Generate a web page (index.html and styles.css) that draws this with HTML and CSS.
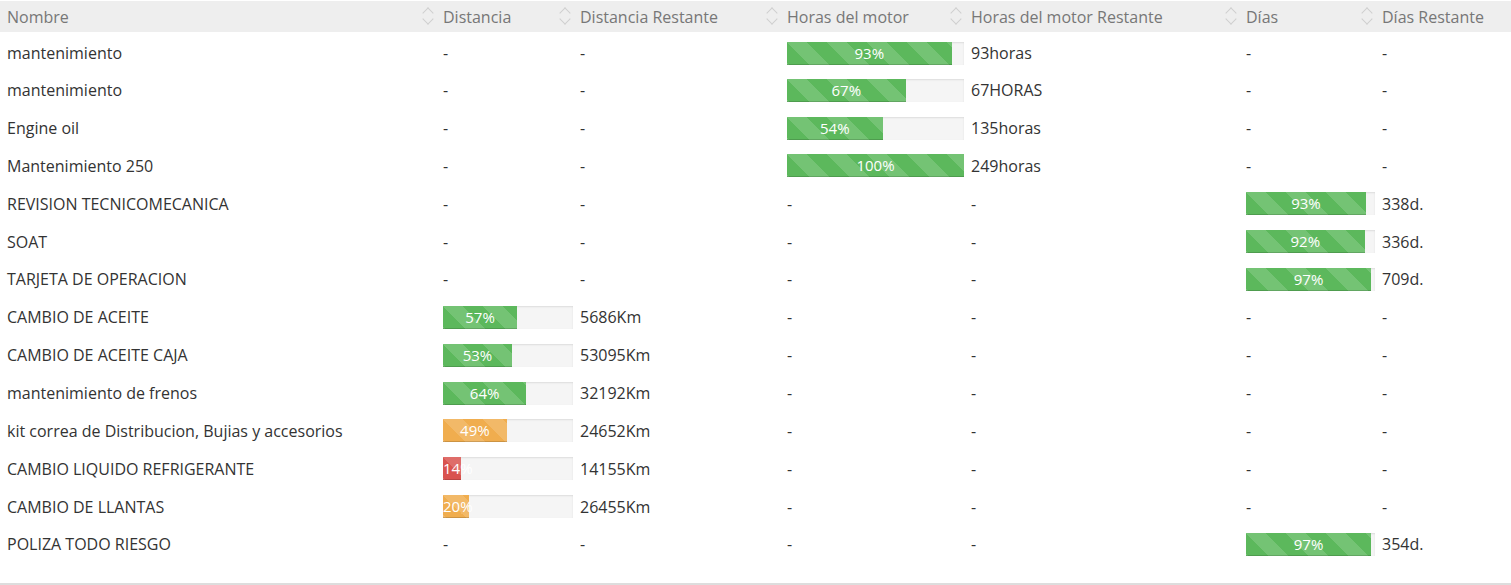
FILE: index.html
```html
<!DOCTYPE html>
<html lang="es">
<head>
<meta charset="utf-8">
<title>Mantenimientos</title>
<link rel="stylesheet" href="styles.css">
</head>
<body>
<div class="wrap">
<table class="grid">
  <colgroup>
    <col class="c1"><col class="c2"><col class="c3"><col class="c4"><col class="c5"><col class="c6"><col class="c7">
  </colgroup>
  <thead>
    <tr>
      <th><div class="hd"><span>Nombre</span><span class="sort"></span></div></th>
      <th><div class="hd"><span>Distancia</span><span class="sort"></span></div></th>
      <th><div class="hd"><span>Distancia Restante</span><span class="sort"></span></div></th>
      <th><div class="hd"><span>Horas del motor</span><span class="sort"></span></div></th>
      <th><div class="hd"><span>Horas del motor Restante</span><span class="sort"></span></div></th>
      <th><div class="hd"><span>Días</span><span class="sort"></span></div></th>
      <th><div class="hd"><span>Días Restante</span></div></th>
    </tr>
  </thead>
  <tbody>
    <tr><td>mantenimiento</td><td>-</td><td>-</td><td><div class="bar"><div class="fill ok" style="width:93%">93%</div></div></td><td>93horas</td><td>-</td><td>-</td></tr>
    <tr><td>mantenimiento</td><td>-</td><td>-</td><td><div class="bar"><div class="fill ok" style="width:67%">67%</div></div></td><td>67HORAS</td><td>-</td><td>-</td></tr>
    <tr><td>Engine oil</td><td>-</td><td>-</td><td><div class="bar"><div class="fill ok" style="width:54%">54%</div></div></td><td>135horas</td><td>-</td><td>-</td></tr>
    <tr><td>Mantenimiento 250</td><td>-</td><td>-</td><td><div class="bar"><div class="fill ok" style="width:100%">100%</div></div></td><td>249horas</td><td>-</td><td>-</td></tr>
    <tr><td>REVISION TECNICOMECANICA</td><td>-</td><td>-</td><td>-</td><td>-</td><td><div class="bar"><div class="fill ok" style="width:93%">93%</div></div></td><td>338d.</td></tr>
    <tr><td>SOAT</td><td>-</td><td>-</td><td>-</td><td>-</td><td><div class="bar"><div class="fill ok" style="width:92%">92%</div></div></td><td>336d.</td></tr>
    <tr><td>TARJETA DE OPERACION</td><td>-</td><td>-</td><td>-</td><td>-</td><td><div class="bar"><div class="fill ok" style="width:97%">97%</div></div></td><td>709d.</td></tr>
    <tr><td>CAMBIO DE ACEITE</td><td><div class="bar"><div class="fill ok" style="width:57%">57%</div></div></td><td>5686Km</td><td>-</td><td>-</td><td>-</td><td>-</td></tr>
    <tr><td>CAMBIO DE ACEITE CAJA</td><td><div class="bar"><div class="fill ok" style="width:53%">53%</div></div></td><td>53095Km</td><td>-</td><td>-</td><td>-</td><td>-</td></tr>
    <tr><td>mantenimiento de frenos</td><td><div class="bar"><div class="fill ok" style="width:64%">64%</div></div></td><td>32192Km</td><td>-</td><td>-</td><td>-</td><td>-</td></tr>
    <tr><td>kit correa de Distribucion, Bujias y accesorios</td><td><div class="bar"><div class="fill warn" style="width:49%">49%</div></div></td><td>24652Km</td><td>-</td><td>-</td><td>-</td><td>-</td></tr>
    <tr><td>CAMBIO LIQUIDO REFRIGERANTE</td><td><div class="bar"><div class="fill bad" style="width:14%">14%</div></div></td><td>14155Km</td><td>-</td><td>-</td><td>-</td><td>-</td></tr>
    <tr><td>CAMBIO DE LLANTAS</td><td><div class="bar"><div class="fill warn" style="width:20%">20%</div></div></td><td>26455Km</td><td>-</td><td>-</td><td>-</td><td>-</td></tr>
    <tr><td>POLIZA TODO RIESGO</td><td>-</td><td>-</td><td>-</td><td>-</td><td><div class="bar"><div class="fill ok" style="width:97%">97%</div></div></td><td>354d.</td></tr>
  </tbody>
</table>
</div>
</body>
</html>
```
FILE: styles.css
```css
html, body {
  margin: 0;
  padding: 0;
  background: #fff;
}
body {
  font-family: "Open Sans", "Liberation Sans", sans-serif;
  font-size: 16px;
  color: #333;
}
.wrap {
  padding-top: 1px;
  height: 582px;
  border-bottom: 2px solid #dddddd;
}
.grid {
  border-collapse: collapse;
  table-layout: fixed;
  width: 1511px;
}
.c1 { width: 436px; }
.c2 { width: 137px; }
.c3 { width: 207px; }
.c4 { width: 184px; }
.c5 { width: 275px; }
.c6 { width: 136px; }
.c7 { width: 136px; }
.grid th {
  background: #eeeeee;
  color: #777;
  font-weight: normal;
  text-align: left;
  height: 31px;
  padding: 0 0 0 7px;
  border-bottom: 3px solid #fff;
  white-space: nowrap;
}
.hd {
  display: flex;
  align-items: center;
  justify-content: space-between;
}
.sort {
  position: relative;
  width: 12px;
  height: 22px;
  margin-right: 2px;
}
.sort::before,
.sort::after {
  content: "";
  position: absolute;
  left: 2px;
  width: 7px;
  height: 7px;
  border-left: 1.3px solid #cfcfcf;
  border-top: 1.3px solid #cfcfcf;
}
.sort::before {
  top: 3.5px;
  transform: rotate(45deg);
}
.sort::after {
  top: 9.5px;
  transform: rotate(-135deg);
}
.grid td {
  height: 37.85px;
  padding: 0 0 0 7px;
  white-space: nowrap;
  box-sizing: border-box;
  vertical-align: middle;
}
.bar {
  height: 23px;
  background: #f5f5f5;
  box-shadow: inset 0 1px 2px rgba(0,0,0,.1);
  overflow: hidden;
}
.fill {
  height: 100%;
  color: #fff;
  text-align: center;
  font-size: 15px;
  line-height: 23px;
  box-shadow: inset 0 -1px 0 rgba(0,0,0,.15);
  background-image: linear-gradient(45deg, rgba(255,255,255,.15) 25%, transparent 25%, transparent 50%, rgba(255,255,255,.15) 50%, rgba(255,255,255,.15) 75%, transparent 75%, transparent);
  background-size: 40px 40px;
  white-space: nowrap;
}
.ok { background-color: #5cb85c; }
.warn { background-color: #f0ad4e; }
.bad { background-color: #d9534f; }
```
